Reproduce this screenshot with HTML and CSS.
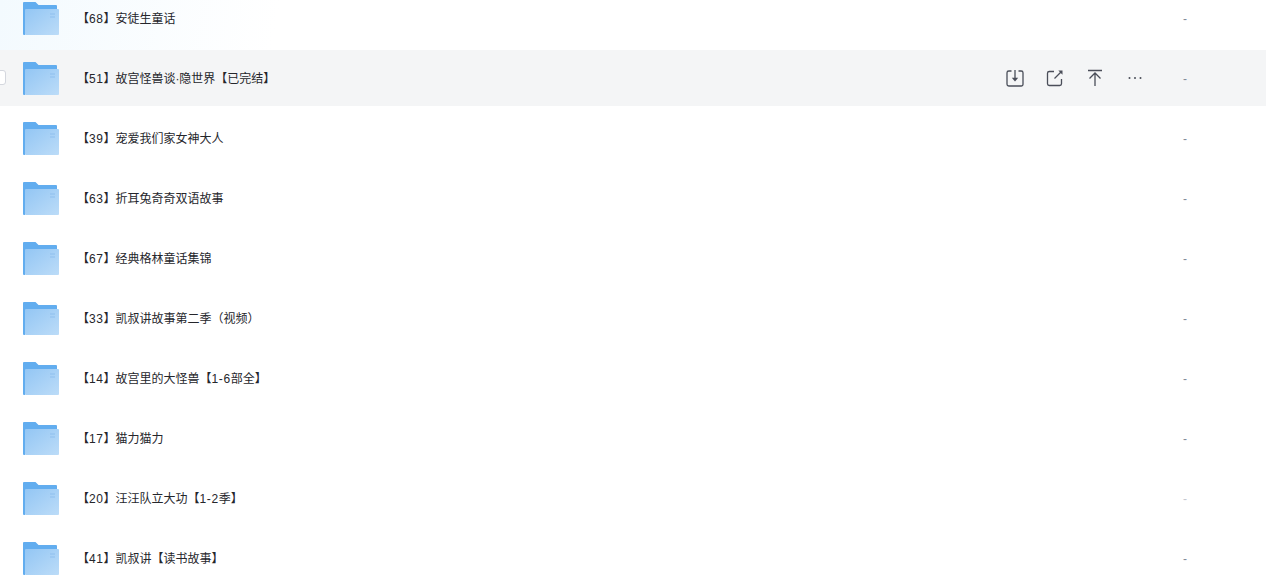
FILE: index.html
```html
<!DOCTYPE html>
<html lang="en">
<head>
    <meta charset="UTF-8">
    <title>文件列表</title>
    <link rel="stylesheet" href="styles.css">
</head>
<body>
    <svg class="defs" width="0" height="0">
        <defs>
            <linearGradient id="folderFront" x1="0" y1="0" x2="1" y2="1">
                <stop offset="0" stop-color="#93c6f4"/>
                <stop offset="1" stop-color="#bcdcf8"/>
            </linearGradient>
            <symbol id="folder" viewBox="0 0 36 33">
                <path d="M0 1a1 1 0 0 1 1-1h11.500l3 3H33a1 1 0 0 1 1 1v4H2v25H1a1 1 0 0 1-1-1z" fill="#62adef"/>
                <rect x="2" y="7" width="34" height="26" rx="1" fill="url(#folderFront)"/>
                <path d="M27 12h5M27 15h5" stroke="#8ebfee" stroke-width="1"/>
            </symbol>
        </defs>
    </svg>

    <ul class="file-list">
        <li class="file-row">
            <svg class="folder"><use href="#folder"/></svg>
            <span class="file-name">【<span class="num">68</span>】安徒生童话</span>
            <span class="file-size">-</span>
        </li>
        <li class="file-row hover">
            <span class="check"></span>
            <svg class="folder"><use href="#folder"/></svg>
            <span class="file-name">【<span class="num">51</span>】故宫怪兽谈·隐世界【已完结】</span>
            <div class="actions">
                <svg class="icon" viewBox="0 0 20 20"><path d="M6.500 3H3.800A1.800 1.800 0 0 0 2 4.800v11.400A1.800 1.800 0 0 0 3.800 18h12.400a1.800 1.800 0 0 0 1.800-1.800V4.800A1.800 1.800 0 0 0 16.200 3h-2.700M10 2v9"/><path class="solid" d="M6.800 9.800h6.400L10 13.400z"/></svg>
                <svg class="icon" viewBox="0 0 20 20"><path d="M9 3.500H4.300A1.800 1.800 0 0 0 2.500 5.300v10.400a1.800 1.800 0 0 0 1.800 1.800h10.400a1.800 1.800 0 0 0 1.800-1.800V11M9.500 10.500l7-7"/><path class="solid" d="M13.300 2.500h4.200v4.200z"/></svg>
                <svg class="icon" viewBox="0 0 20 20"><path d="M3 2.500h14M10 18V5M4.500 10.500 10 5l5.500 5.500"/></svg>
                <svg class="icon" viewBox="0 0 20 20"><circle class="solid" cx="4.500" cy="10" r="1"/><circle class="solid" cx="10" cy="10" r="1"/><circle class="solid" cx="15.500" cy="10" r="1"/></svg>
            </div>
            <span class="file-size">-</span>
        </li>
        <li class="file-row">
            <svg class="folder"><use href="#folder"/></svg>
            <span class="file-name">【<span class="num">39</span>】宠爱我们家女神大人</span>
            <span class="file-size">-</span>
        </li>
        <li class="file-row">
            <svg class="folder"><use href="#folder"/></svg>
            <span class="file-name">【<span class="num">63</span>】折耳兔奇奇双语故事</span>
            <span class="file-size">-</span>
        </li>
        <li class="file-row">
            <svg class="folder"><use href="#folder"/></svg>
            <span class="file-name">【<span class="num">67</span>】经典格林童话集锦</span>
            <span class="file-size">-</span>
        </li>
        <li class="file-row">
            <svg class="folder"><use href="#folder"/></svg>
            <span class="file-name">【<span class="num">33</span>】凯叔讲故事第二季（视频）</span>
            <span class="file-size">-</span>
        </li>
        <li class="file-row">
            <svg class="folder"><use href="#folder"/></svg>
            <span class="file-name">【<span class="num">14</span>】故宫里的大怪兽【<span class="range">1-6</span>部全】</span>
            <span class="file-size">-</span>
        </li>
        <li class="file-row">
            <svg class="folder"><use href="#folder"/></svg>
            <span class="file-name">【<span class="num">17</span>】猫力猫力</span>
            <span class="file-size">-</span>
        </li>
        <li class="file-row">
            <svg class="folder"><use href="#folder"/></svg>
            <span class="file-name">【<span class="num">20</span>】汪汪队立大功【<span class="range">1-2</span>季】</span>
            <span class="file-size pale">-</span>
        </li>
        <li class="file-row">
            <svg class="folder"><use href="#folder"/></svg>
            <span class="file-name">【<span class="num">41</span>】凯叔讲【读书故事】</span>
            <span class="file-size">-</span>
        </li>
    </ul>
</body>
</html>
```

FILE: styles.css
```css
/* General */
html, body {
    height: 100%;
}

body {
    margin: 0;
    overflow: hidden;
    background: linear-gradient(100deg, #f3fafe 0, #ffffff 22%);
    background-size: 100% 60px;
    background-repeat: no-repeat;
    font-family: "Liberation Sans", "Noto Sans CJK SC", sans-serif;
    font-size: 12px;
    color: #25262b;
}

.defs {
    display: block;
}

/* File list, scrolled a little past the top */
.file-list {
    list-style: none;
    margin: -10px 0 0;
    padding: 0;
    display: flex;
    flex-direction: column;
    gap: 4px;
}

.file-row {
    position: relative;
    display: flex;
    align-items: center;
    height: 56px;
    padding-left: 23px;
}

.file-row.hover {
    background-color: #f4f5f6;
}

.folder {
    width: 36px;
    height: 33px;
    flex: none;
}

.file-name {
    margin-left: 18px;
    padding-bottom: 2px;
    flex: 1;
}

.file-name .num {
    letter-spacing: 0.5px;
}

.file-name .range {
    letter-spacing: 0.7px;
}

.file-size {
    width: 83px;
    flex: none;
    padding-top: 1px;
    color: #818999;
}

.file-size.pale {
    color: #c4c8d0;
}

/* Checkbox sticking in from the left edge */
.check {
    position: absolute;
    left: -8px;
    top: 20px;
    width: 12px;
    height: 13px;
    background: #fff;
    border: 1px solid #d4d7de;
    border-radius: 3px;
}

/* Row actions */
.actions {
    display: flex;
    gap: 20px;
    margin-right: 38px;
    padding-bottom: 1px;
}

.icon {
    width: 20px;
    height: 20px;
    fill: none;
    stroke: #4a4e59;
    stroke-width: 1.300;
}

.icon .solid {
    fill: #4a4e59;
    stroke: none;
}
```
